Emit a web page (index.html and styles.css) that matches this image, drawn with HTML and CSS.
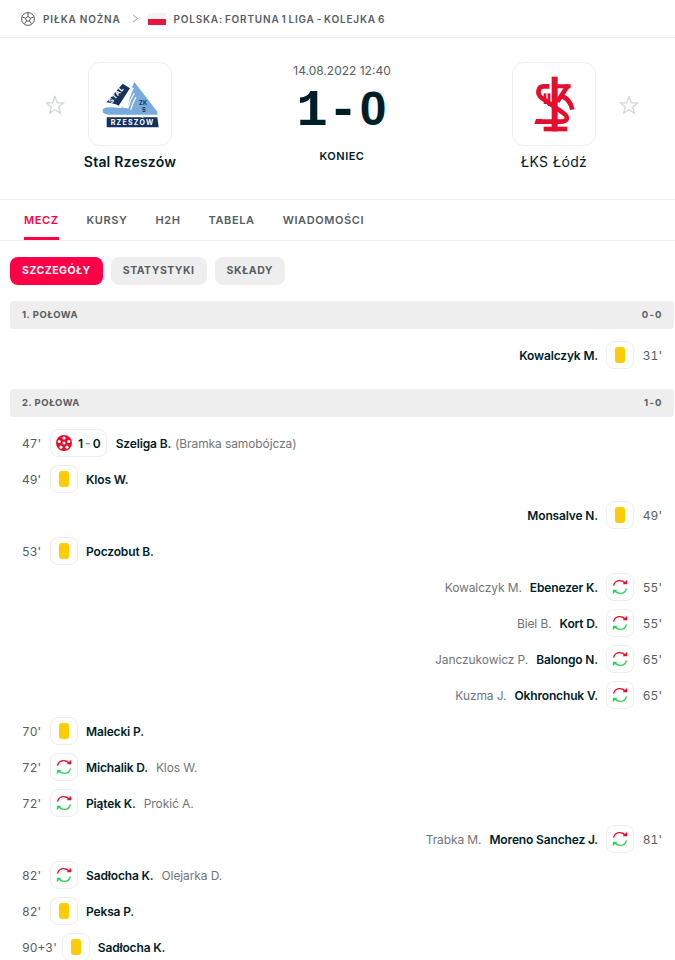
FILE: index.html
```html
<!DOCTYPE html>
<html lang="pl">
<head>
<meta charset="utf-8">
<title>Stal Rzeszów - ŁKS Łódź</title>
<link rel="stylesheet" href="styles.css">
</head>
<body>
<svg class="defs" width="0" height="0" aria-hidden="true">
  <symbol id="swap" viewBox="0 0 18 16">
    <path d="M2.600 6.600C3.200 3.600 5.600 1.600 8.800 1.600c2.400 0 4.300 1.100 5.400 3" fill="none" stroke="#e30f2d" stroke-width="1.300"/>
    <path d="M11.600 5.200h4.600V.8z" fill="#e30f2d"/>
    <path d="M15.400 9.400c-.6 3-3 5-6.200 5-2.400 0-4.300-1.100-5.400-3" fill="none" stroke="#2fd15c" stroke-width="1.300"/>
    <path d="M6.400 10.800H1.800v4.400z" fill="#2fd15c"/>
  </symbol>
</svg>
<div class="page">
  <nav class="crumbs">
    <svg class="ball" viewBox="0 0 14 14"><circle cx="7" cy="7" r="6.400" fill="none" stroke="#555" stroke-width="1"/><path d="M7 4.400 9.500 6.200 8.500 9H5.500L4.500 6.200zM7 4.400V.8M9.500 6.200l3.200-1.100M8.500 9l2 2.700M5.500 9l-2 2.700M4.500 6.200 1.300 5.100" fill="none" stroke="#555" stroke-width="1"/></svg>
    <span class="crumb">PIŁKA NOŻNA</span>
    <svg class="chev" viewBox="0 0 7 9"><path d="M1 .8 5.500 4.500 1 8.200" fill="none" stroke="#999" stroke-width="1"/></svg>
    <span class="flag"></span>
    <span class="crumb league">POLSKA: FORTUNA 1 LIGA - KOLEJKA 6</span>
  </nav>

  <header class="match">
    <svg class="star star-l" viewBox="0 0 20 20"><path d="M10 1.800 12.300 7.600 18.500 8 13.700 12 15.300 18 10 14.700 4.700 18 6.300 12 1.500 8 7.700 7.600z" fill="none" stroke="#d3d6d6" stroke-width="1.300"/></svg>
    <div class="team">
      <div class="logo">
        <svg viewBox="24 21 252 252" width="84" height="84">
          <path d="M163 81 232 170V179H92c-12 0-26-2-24-14 1-6 12-8 24-8 14 0 30 6 36-2z" fill="#78aadc"/>
          <path d="M80 142 128 86 150 100 116 152C104 146 92 144 80 142z" fill="#12325f"/>
          <path d="M128 158c4-20 10-44 26-62l8 4c-10 18-16 36-18 60z" fill="#fff"/>
          <path d="M80 187H232L236 217H80z" fill="#12325f"/>
          <path d="M134 154c6-18 12-34 22-50M143 160c4-14 10-30 20-46M152 164c4-14 8-24 16-38" fill="none" stroke="#fff" stroke-width="4"/>
          <text class="t-rz" x="92" y="210" textLength="128">RZESZÓW</text>
          <text class="t-stal" transform="translate(95 146) rotate(-50)">STAL</text>
          <text class="t-zks" x="177" y="151">ZK</text>
          <text class="t-zks" x="186" y="170">S</text>
        </svg>
      </div>
      <div class="team-name strong">Stal Rzeszów</div>
    </div>
    <div class="center">
      <div class="date">14.08.2022 12:40</div>
      <div class="score"><span class="sc-one">1</span><span class="sc-dash">-</span><span class="sc-zero">0</span></div>
      <div class="status">KONIEC</div>
    </div>
    <div class="team">
      <div class="logo">
        <svg viewBox="21 21 252 252" width="84" height="84">
          <g fill="#e30f2d">
            <rect x="140" y="65" width="18" height="164"/>
            <rect x="116" y="215" width="71" height="14"/>
            <rect x="116" y="115" width="8" height="32"/>
            <rect x="128" y="115" width="8" height="38"/>
            <path d="M102 207 88 207 93 192H112z"/>
          </g>
          <g fill="none" stroke="#e30f2d" stroke-width="14">
            <path d="M133 94H116C98 94 96 118 108 127L172 172C192 186 190 200 165 200H96"/>
            <path d="M157 140 190 90"/>
            <path d="M168 122c18 6 30 22 34 42"/>
            <path d="M141 94H197" stroke-width="12"/>
          </g>
        </svg>
      </div>
      <div class="team-name">ŁKS Łódź</div>
    </div>
    <svg class="star star-r" viewBox="0 0 20 20"><path d="M10 1.800 12.300 7.600 18.500 8 13.700 12 15.300 18 10 14.700 4.700 18 6.300 12 1.500 8 7.700 7.600z" fill="none" stroke="#d3d6d6" stroke-width="1.300"/></svg>
  </header>

  <nav class="tabs">
    <span class="tab active">MECZ</span>
    <span class="tab">KURSY</span>
    <span class="tab">H2H</span>
    <span class="tab">TABELA</span>
    <span class="tab">WIADOMOŚCI</span>
  </nav>

  <div class="pills">
    <span class="pill on">SZCZEGÓŁY</span>
    <span class="pill">STATYSTYKI</span>
    <span class="pill">SKŁADY</span>
  </div>

  <main class="feed">
    <div class="section"><span>1. POŁOWA</span><span class="sec-score">0 - 0</span></div>
    <div class="rows first">
      <div class="row away"><span class="min">31'</span><span class="ico"><i class="card"></i></span><b>Kowalczyk M.</b></div>
    </div>
    <div class="section"><span>2. POŁOWA</span><span class="sec-score">1 - 0</span></div>
    <div class="rows">
      <div class="row"><span class="min">47'</span><span class="ico goal">
        <svg class="fb" viewBox="0 0 16 16"><circle cx="8" cy="8" r="8" fill="#e30f2d"/><g fill="#fff"><circle cx="8" cy="8" r="1.500"/><circle cx="8" cy="3" r="1.600"/><circle cx="12.800" cy="6.500" r="1.600"/><circle cx="11" cy="12.200" r="1.600"/><circle cx="5" cy="12.200" r="1.600"/><circle cx="3.200" cy="6.500" r="1.600"/></g></svg>
        <b class="gs">1 <span class="gs-dash">-</span> 0</b></span><b>Szeliga B.</b><span class="sub note">(Bramka samobójcza)</span></div>
      <div class="row"><span class="min">49'</span><span class="ico"><i class="card"></i></span><b>Klos W.</b></div>
      <div class="row away"><span class="min">49'</span><span class="ico"><i class="card"></i></span><b>Monsalve N.</b></div>
      <div class="row"><span class="min">53'</span><span class="ico"><i class="card"></i></span><b>Poczobut B.</b></div>
      <div class="row away"><span class="min">55'</span><span class="ico"><svg class="sw"><use href="#swap"/></svg></span><b>Ebenezer K.</b><span class="sub">Kowalczyk M.</span></div>
      <div class="row away"><span class="min">55'</span><span class="ico"><svg class="sw"><use href="#swap"/></svg></span><b>Kort D.</b><span class="sub">Biel B.</span></div>
      <div class="row away"><span class="min">65'</span><span class="ico"><svg class="sw"><use href="#swap"/></svg></span><b>Balongo N.</b><span class="sub">Janczukowicz P.</span></div>
      <div class="row away"><span class="min">65'</span><span class="ico"><svg class="sw"><use href="#swap"/></svg></span><b>Okhronchuk V.</b><span class="sub">Kuzma J.</span></div>
      <div class="row"><span class="min">70'</span><span class="ico"><i class="card"></i></span><b>Malecki P.</b></div>
      <div class="row"><span class="min">72'</span><span class="ico"><svg class="sw"><use href="#swap"/></svg></span><b>Michalik D.</b><span class="sub">Klos W.</span></div>
      <div class="row"><span class="min">72'</span><span class="ico"><svg class="sw"><use href="#swap"/></svg></span><b>Piątek K.</b><span class="sub">Prokić A.</span></div>
      <div class="row away"><span class="min">81'</span><span class="ico"><svg class="sw"><use href="#swap"/></svg></span><b>Moreno Sanchez J.</b><span class="sub">Trabka M.</span></div>
      <div class="row"><span class="min">82'</span><span class="ico"><svg class="sw"><use href="#swap"/></svg></span><b>Sadłocha K.</b><span class="sub">Olejarka D.</span></div>
      <div class="row"><span class="min">82'</span><span class="ico"><i class="card"></i></span><b>Peksa P.</b></div>
      <div class="row"><span class="min">90+3'</span><span class="ico"><i class="card"></i></span><b>Sadłocha K.</b></div>
    </div>
  </main>
</div>
</body>
</html>
```
FILE: styles.css
```css
* { box-sizing: border-box; }
html, body { margin: 0; padding: 0; background: #fff; }
body { font-family: Inter, "Noto Sans", sans-serif; color: #001e28; font-size: 12px; }
.defs { position: absolute; }
.page { width: 675px; height: 960px; overflow: hidden; }

.crumbs { height: 38px; display: flex; align-items: center; padding-left: 21px; border-bottom: 1px solid #eee; }
.ball { width: 14px; height: 14px; margin-right: 8px; }
.crumb { font-size: 10px; font-weight: 600; letter-spacing: .8px; color: #555e61; }
.crumb.league { word-spacing: -1.300px; }
.chev { width: 7px; height: 9px; margin: 0 9px 0 11px; }
.flag { width: 18px; height: 12px; margin-right: 8px; background: linear-gradient(#f3f3f3 50%, #e4173e 50%); }

.match { height: 162px; display: flex; align-items: flex-start; padding-top: 24px; border-bottom: 1px solid #eee; }
.star { width: 20px; height: 20px; margin-top: 33px; flex: none; }
.star-l { margin-left: 45px; margin-right: 5px; }
.star-r { margin-left: 5px; }
.team { width: 120px; flex: none; display: flex; flex-direction: column; align-items: center; }
.logo { width: 84px; height: 84px; border: 1px solid #eee; border-radius: 12px; overflow: hidden; }
.logo svg { display: block; margin: -1px; }
.team-name { margin-top: 7px; font-size: 14px; line-height: 17px; letter-spacing: .35px; white-space: nowrap; }
.team-name.strong { font-weight: 600; letter-spacing: .2px; }
.center { width: 304px; flex: none; display: flex; flex-direction: column; align-items: center; margin-top: -24px; padding-top: 25px; }
.date { font-size: 12px; line-height: 15px; color: #555e61; }
.score { display: flex; align-items: baseline; justify-content: center; height: 50px; line-height: 50px; margin-top: 6px; font-weight: 700; }
.sc-one, .sc-dash { font-family: "Liberation Mono", monospace; font-size: 52px; }
.sc-one { width: 31px; text-align: center; }
.sc-dash { width: 31px; text-align: center; }
.sc-zero { font-family: "Liberation Sans", sans-serif; font-size: 48px; width: 29px; text-align: center; }
.status { font-size: 11px; font-weight: 600; letter-spacing: .5px; line-height: 14px; margin-top: 15px; }
.t-rz { font-family: Inter, sans-serif; font-weight: 700; font-size: 21px; fill: #fff; }
.t-stal { font-family: Inter, sans-serif; font-weight: 700; font-size: 20px; letter-spacing: 2px; fill: #fff; }
.t-zks { font-family: Inter, sans-serif; font-weight: 700; font-size: 17px; letter-spacing: 1px; fill: #12325f; }

.tabs { height: 41px; display: flex; gap: 28px; padding-left: 24px; border-bottom: 1px solid #eee; }
.tab { height: 40px; line-height: 40px; font-size: 11px; font-weight: 600; letter-spacing: .6px; color: #555e61; }
.tab.active { color: #ff0046; border-bottom: 3px solid #ff0046; }

.pills { display: flex; gap: 8px; padding: 16px 0 0 10px; }
.pill { height: 28px; line-height: 28px; padding: 0 12px; border-radius: 8px; background: #eee; font-size: 10.500px; font-weight: 700; letter-spacing: .5px; color: #555e61; }
.pill.on { background: #ff0046; color: #fff; }

.feed { margin: 16px 1px 0 10px; }
.section { height: 28px; display: flex; align-items: center; justify-content: space-between; padding: 0 12px 1px; background: #eee; border-radius: 4px; font-size: 9.500px; font-weight: 700; letter-spacing: .5px; color: #555e61; }
.sec-score { word-spacing: -2px; }
.rows { padding-top: 8px; padding-bottom: 18px; }
.rows.first { padding-bottom: 16px; }

.row { height: 36px; display: flex; align-items: center; padding-left: 12px; font-size: 12px; }
.row.away { flex-direction: row-reverse; padding-left: 0; padding-right: 12px; }
.row b { font-weight: 600; letter-spacing: -.15px; }
.min { min-width: 28px; padding-right: 5px; color: #555e61; font-variant-numeric: tabular-nums; }
.away .min { min-width: 0; width: 28px; padding: 0; text-align: right; white-space: nowrap; }
.ico { height: 28px; min-width: 28px; display: flex; align-items: center; justify-content: center; border: 1px solid #eee; border-radius: 8px; margin-right: 8px; }
.away .ico { margin: 0 0 0 8px; }
.card { display: block; width: 10px; height: 16px; border-radius: 3px; background: #fc0; }
.ico.goal { padding: 0 5px; gap: 6px; margin-right: 9px; }
.fb { width: 16px; height: 16px; }
.row .gs { font-size: 12px; word-spacing: -1px; letter-spacing: 0; }
.gs-dash { color: #8a9092; }
.sw { width: 18px; height: 16px; }
.sub { color: #6f7678; margin-left: 8px; letter-spacing: -.1px; }
.away .sub { margin: 0 8px 0 0; }
.sub.note { margin-left: 4px; }
```
